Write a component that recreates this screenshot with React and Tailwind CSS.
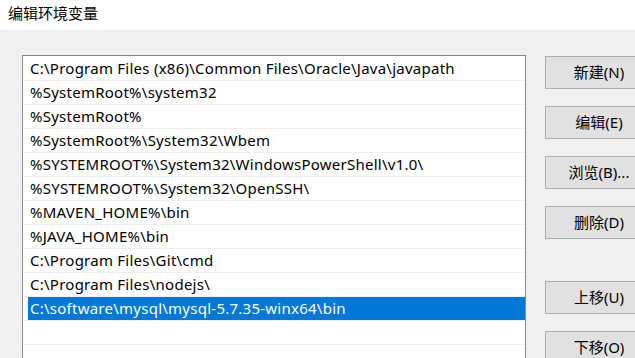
const paths = [
    'C:\\Program Files (x86)\\Common Files\\Oracle\\Java\\javapath',
    '%SystemRoot%\\system32',
    '%SystemRoot%',
    '%SystemRoot%\\System32\\Wbem',
    '%SYSTEMROOT%\\System32\\WindowsPowerShell\\v1.0\\',
    '%SYSTEMROOT%\\System32\\OpenSSH\\',
    '%MAVEN_HOME%\\bin',
    '%JAVA_HOME%\\bin',
    'C:\\Program Files\\Git\\cmd',
    'C:\\Program Files\\nodejs\\',
    'C:\\software\\mysql\\mysql-5.7.35-winx64\\bin',
    '',
    '',
];

const SELECTED = 10;

function Button({ children, className = '' }) {
    return (
        <button
            className={
                'w-[108px] h-[33px] shrink-0 border border-[#adadad] bg-[#e1e1e1] text-[15px] text-black text-center leading-none ' +
                className
            }
        >
            {children}
        </button>
    );
}

export default function App() {
    return (
        <div
            className="w-[635px] h-[358px] overflow-hidden bg-[#f0f0f0] text-black"
            style={{ fontFamily: '"Noto Sans", "Noto Sans CJK SC", sans-serif' }}
        >
            {/* title bar */}
            <div className="h-[30px] bg-white pl-2 flex items-center text-[15px] pb-[3px]">
                编辑环境变量
            </div>

            <div className="flex pl-[22px] pt-[25px]">
                {/* path list */}
                <div className="w-[504px] h-[320px] shrink-0 border border-[#828790] bg-white pt-px">
                    {paths.map((p, i) => (
                        <div key={i} className="h-[24px] border-b border-[#f0f0f0]">
                            {i === SELECTED ? (
                                <div className="ml-[5px] h-full bg-[#0078d7] text-white pl-[2px] flex items-center text-[15px] tracking-[0.25px] whitespace-nowrap">
                                    {p}
                                </div>
                            ) : (
                                <div className="h-full pl-[7px] flex items-center text-[15px] tracking-[0.25px] whitespace-nowrap">
                                    {p}
                                </div>
                            )}
                        </div>
                    ))}
                </div>

                {/* buttons */}
                <div className="ml-[19px] mt-px flex flex-col">
                    <Button>新建(N)</Button>
                    <Button className="mt-[17px]">编辑(E)</Button>
                    <Button className="mt-[17px]">浏览(B)...</Button>
                    <Button className="mt-[17px]">删除(D)</Button>
                    <Button className="mt-[42px]">上移(U)</Button>
                    <Button className="mt-[17px]">下移(O)</Button>
                </div>
            </div>
        </div>
    );
}
